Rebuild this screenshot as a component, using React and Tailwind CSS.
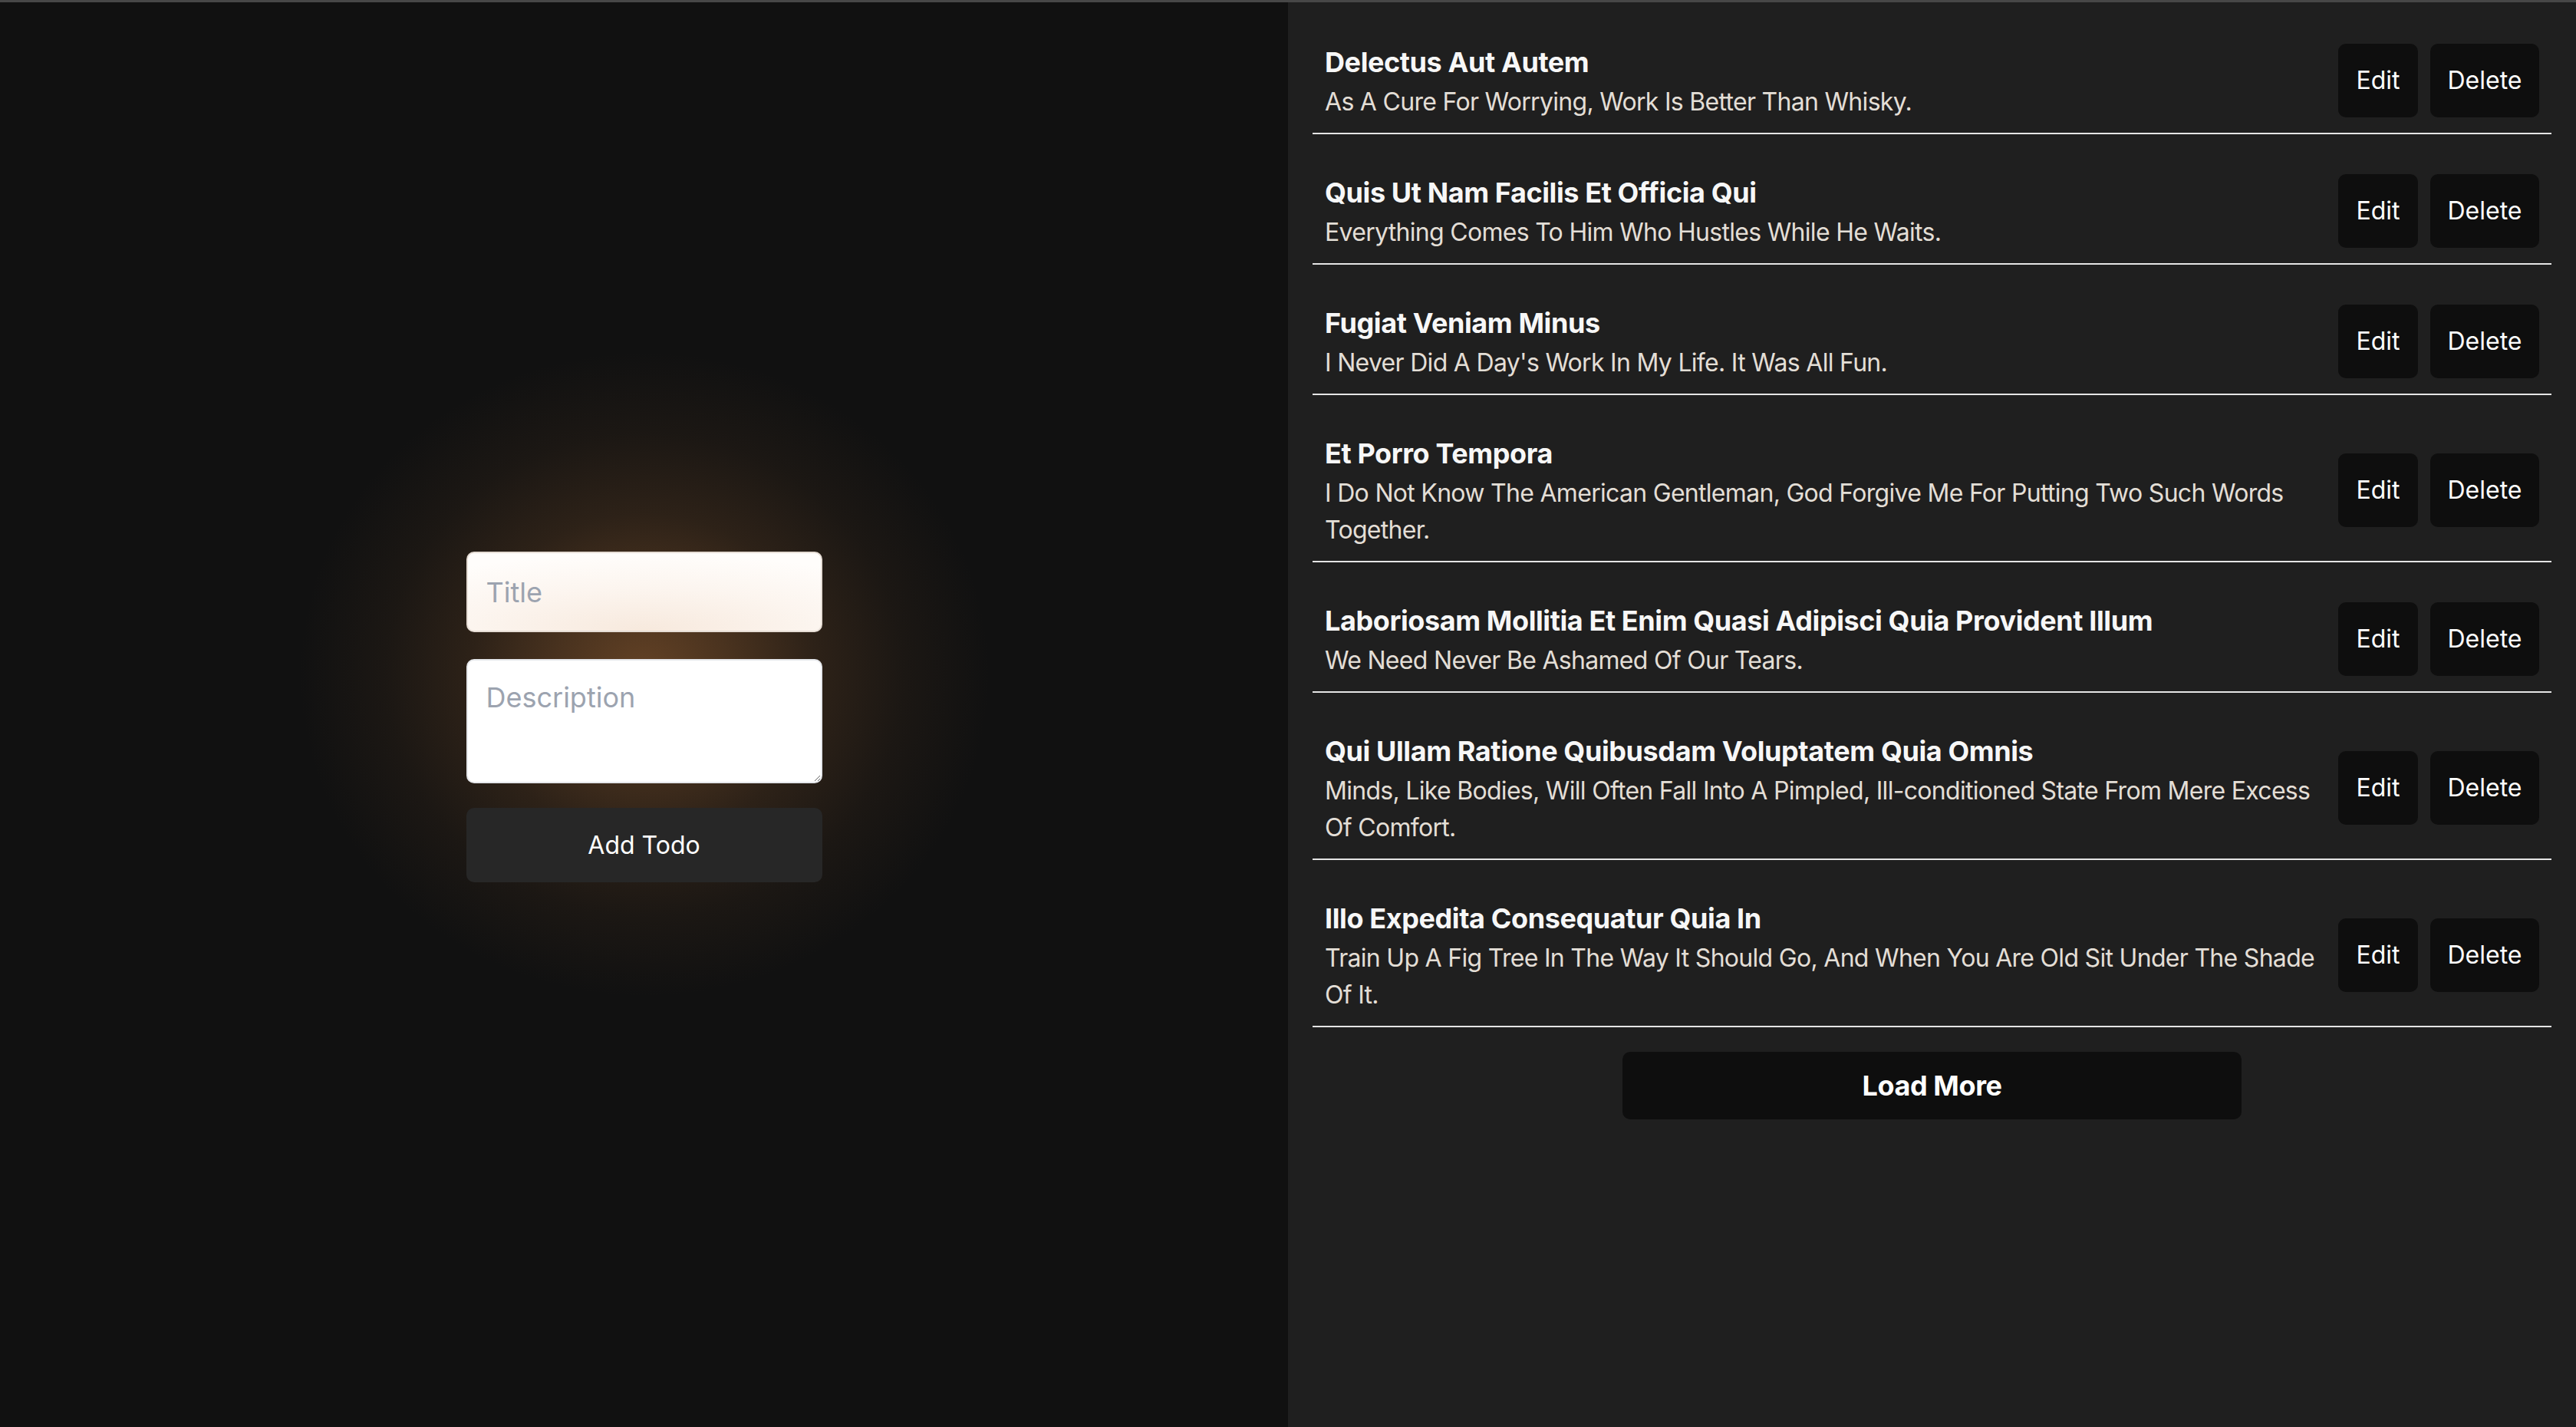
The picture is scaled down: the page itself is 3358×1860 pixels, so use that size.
import React from "react";

const todos = [
  { t: "Delectus Aut Autem", d: "As A Cure For Worrying, Work Is Better Than Whisky." },
  { t: "Quis Ut Nam Facilis Et Officia Qui", d: "Everything Comes To Him Who Hustles While He Waits." },
  { t: "Fugiat Veniam Minus", d: "I Never Did A Day's Work In My Life. It Was All Fun." },
  { t: "Et Porro Tempora", d: "I Do Not Know The American Gentleman, God Forgive Me For Putting Two Such Words Together." },
  { t: "Laboriosam Mollitia Et Enim Quasi Adipisci Quia Provident Illum", d: "We Need Never Be Ashamed Of Our Tears." },
  { t: "Qui Ullam Ratione Quibusdam Voluptatem Quia Omnis", d: "Minds, Like Bodies, Will Often Fall Into A Pimpled, Ill-conditioned State From Mere Excess Of Comfort." },
  { t: "Illo Expedita Consequatur Quia In", d: "Train Up A Fig Tree In The Way It Should Go, And When You Are Old Sit Under The Shade Of It." },
];

export default function App() {
  return (
    <div
      className="flex h-screen w-full border-t-[3px] border-[#474747] overflow-hidden"
      style={{ fontFamily: "Inter, 'Noto Sans', sans-serif" }}
    >
      {/* Left panel */}
      <div className="w-1/2 bg-[#111111] flex items-center justify-center">
        <div className="relative mt-[6px] w-[464px] flex flex-col">
          <div className="pointer-events-none absolute left-1/2 top-[160px] -translate-x-1/2 -translate-y-1/2 w-[900px] h-[840px] bg-[radial-gradient(ellipse_closest-side,rgba(120,78,42,0.8),rgba(120,78,42,0.55)_25%,rgba(120,78,42,0.27)_50%,rgba(120,78,42,0.1)_75%,rgba(120,78,42,0))]" />
          <input
            placeholder="Title"
            className="relative h-[105px] w-full rounded-[10px] border-2 border-[#e6ddd5] px-6 text-[36px] text-black outline-none placeholder:text-[#9ca3af] bg-[radial-gradient(ellipse_90%_100%_at_50%_100%,#f7e9dd,#fcf5ef_55%,#fffdfb)]"
          />
          <textarea
            placeholder="Description"
            className="relative mt-[35px] h-[162px] w-full rounded-[10px] border-2 border-[#e5e7eb] bg-white px-6 py-5 text-[36px] leading-[56px] text-black outline-none placeholder:text-[#9ca3af]"
          />
          <button className="relative mt-[32px] h-[97px] w-full rounded-[10px] bg-[#272727] text-[32px] text-white">
            Add Todo
          </button>
        </div>
      </div>

      {/* Right panel */}
      <div className="w-1/2 bg-[#1f1f1f] px-8 overflow-hidden">
        <ul className="flex flex-col pt-[2px]">
          {todos.map((item, i) => (
            <li
              key={i}
              className="mt-8 flex items-center justify-between gap-4 border-b-2 border-[#e5e5e5] p-4"
            >
              <div className="flex-1 min-w-0">
                <div className="text-[36px] leading-[56px] font-bold tracking-[-0.4px] text-[#f7f7f7]">{item.t}</div>
                <div className="text-[32px] leading-[48px] tracking-[-0.7px] text-[#e3ded6]">{item.d}</div>
              </div>
              <div className="flex gap-4 shrink-0">
                <button className="h-[96px] w-[104px] rounded-[10px] bg-[#0e0e0e] text-[32px] text-white">
                  Edit
                </button>
                <button className="h-[96px] w-[142px] rounded-[10px] bg-[#0e0e0e] text-[32px] text-white">
                  Delete
                </button>
              </div>
            </li>
          ))}
        </ul>
        <div className="mt-8 flex justify-center">
          <button className="h-[88px] w-1/2 rounded-[10px] bg-[#0e0e0e] text-[36px] font-bold tracking-[-0.4px] text-white">
            Load More
          </button>
        </div>
      </div>
    </div>
  );
}
